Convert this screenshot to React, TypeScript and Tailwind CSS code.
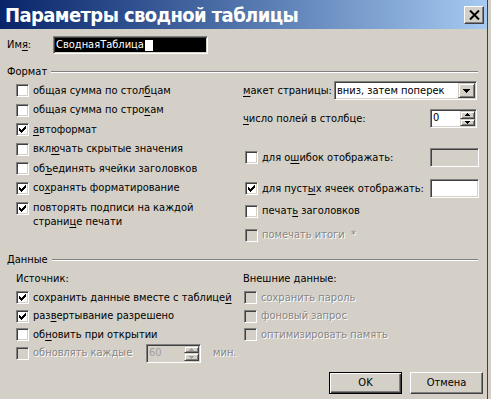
import React from "react";

const sunken =
  "border border-t-[#808080] border-l-[#808080] border-r-white border-b-white shadow-[inset_1px_1px_0_#404040,inset_-1px_-1px_0_#d4d0c8]";
const raised =
  "border border-t-[#d4d0c8] border-l-[#d4d0c8] border-r-[#404040] border-b-[#404040] shadow-[inset_1px_1px_0_#fff,inset_-1px_-1px_0_#808080]";
const grayText = "text-[#868686] [text-shadow:1px_1px_0_#fff]";

function U({ children }: { children: React.ReactNode }) {
  return <span className="underline decoration-1 underline-offset-[2px]">{children}</span>;
}

function Box({ checked, disabled }: { checked?: boolean; disabled?: boolean }) {
  return (
    <span
      className={`relative block w-[13px] h-[13px] shrink-0 ${sunken} ${disabled ? "bg-[#d4d0c8]" : "bg-white"}`}
    >
      {checked && (
        <svg
          width="7"
          height="7"
          viewBox="0 0 7 7"
          shapeRendering="crispEdges"
          className="absolute left-[2px] top-[2px]"
        >
          <path
            fill="#000"
            d="M0 2h1v3H0zM1 3h1v3H1zM2 4h1v3H2zM3 3h1v3H3zM4 2h1v3H4zM5 1h1v3H5zM6 0h1v3H6z"
          />
        </svg>
      )}
    </span>
  );
}

function Check({
  checked,
  disabled,
  children,
  className = "h-[19.5px]",
}: {
  checked?: boolean;
  disabled?: boolean;
  children: React.ReactNode;
  className?: string;
}) {
  return (
    <div className={`flex items-center gap-[4px] ${className}`}>
      <Box checked={checked} disabled={disabled} />
      <span className={disabled ? grayText : ""}>{children}</span>
    </div>
  );
}

function Arrow({ up, small, color = "#000" }: { up?: boolean; small?: boolean; color?: string }) {
  if (small) {
    return (
      <svg width="5" height="3" viewBox="0 0 5 3" shapeRendering="crispEdges">
        <path
          fill={color}
          d={up ? "M2 0h1v1H2zM1 1h3v1H1zM0 2h5v1H0z" : "M0 0h5v1H0zM1 1h3v1H1zM2 2h1v1H2z"}
        />
      </svg>
    );
  }
  return (
    <svg width="7" height="4" viewBox="0 0 7 4" shapeRendering="crispEdges">
      <path fill={color} d="M0 0h7v1H0zM1 1h5v1H1zM2 2h3v1H2zM3 3h1v1H3z" />
    </svg>
  );
}

function Spin({ value, disabled, className }: { value: string; disabled?: boolean; className: string }) {
  const arrow = disabled ? "#a0a0a0" : "#000";
  return (
    <div className={`flex ${sunken} ${disabled ? "bg-[#d4d0c8]" : "bg-white"} ${className}`}>
      <span className={`flex-1 pl-[2px] leading-[16px] ${disabled ? "text-[#a0a0a0]" : ""}`}>{value}</span>
      <div className="flex flex-col w-[16px] p-[1px] pl-0">
        <div className={`flex-1 flex items-center justify-center bg-[#d4d0c8] ${raised}`}>
          <Arrow up small color={arrow} />
        </div>
        <div className={`flex-1 flex items-center justify-center bg-[#d4d0c8] ${raised}`}>
          <Arrow small color={arrow} />
        </div>
      </div>
    </div>
  );
}

function GroupHeader({ title }: { title: string }) {
  return (
    <div className="flex items-center h-[14px] pl-[7px] pr-[9px]">
      <span>{title}</span>
      <div className="flex-1 ml-[4px] h-[2px] border-t border-t-[#808080] border-b border-b-white" />
    </div>
  );
}

function TitleBar() {
  return (
    <div className="flex items-center justify-between h-[29px] pl-[5px] pr-[3px] bg-gradient-to-r from-[#0a246a] to-[#a6caf0]">
      <span className="text-white font-bold text-[20px] leading-none tracking-[-0.6px]">
        Параметры сводной таблицы
      </span>
      <button className="flex items-center justify-center w-[20px] h-[18px] bg-[#d4d0c8] border border-t-white border-l-white border-r-[#404040] border-b-[#404040] shadow-[inset_-1px_-1px_0_#808080]">
        <svg width="11" height="10" viewBox="0 0 11 10">
          <path d="M1 0.5 L10 9.5 M10 0.5 L1 9.5" stroke="#000" strokeWidth="2" />
        </svg>
      </button>
    </div>
  );
}

export default function App() {
  return (
    <div className="flex w-[491px] h-[399px] overflow-hidden whitespace-nowrap bg-[#d4d0c8] text-[11px] leading-[14px] text-black [font-family:'DejaVu_Sans_Condensed','DejaVu_Sans',sans-serif]">
      <div className="flex flex-col w-[487px]">
        <TitleBar />

        <div className="flex items-center mt-[7px] h-[18px] pl-[7px]">
          <span className="w-[46px]">
            Им<U>я</U>:
          </span>
          <div className={`flex items-center w-[155px] h-[18px] bg-white p-[1px] ${sunken}`}>
            <div className="flex items-center w-full h-full bg-black text-white pl-[1px]">
              <span>СводнаяТаблица</span>
              <span className="w-[8px] h-[11px] bg-white ml-[1px]" />
            </div>
          </div>
        </div>

        <div className="mt-[11px]">
          <GroupHeader title="Формат" />
        </div>

        <div className="grid grid-cols-[227px_1fr] h-[172px] mt-[2px] pl-[16px] pr-[8px]">
          <div className="flex flex-col">
            <Check>
              общая сумма по стол<U>б</U>цам
            </Check>
            <Check>
              общая сумма по стро<U>к</U>ам
            </Check>
            <Check checked>
              <U>а</U>втоформат
            </Check>
            <Check>
              вкл<U>ю</U>чать скрытые значения
            </Check>
            <Check>
              об<U>ъ</U>единять ячейки заголовков
            </Check>
            <Check checked>
              со<U>х</U>ранять форматирование
            </Check>
            <div className="flex items-start gap-[4px] pt-[3px]">
              <span className="mt-[0.5px]">
                <Box checked />
              </span>
              <span>
                повторять подписи на каждой
                <br />
                страни<U>ц</U>е печати
              </span>
            </div>
          </div>

          <div className="flex flex-col">
            <div className="flex items-center h-[19px]">
              <span className="w-[91px]">
                <U>м</U>акет страницы:
              </span>
              <div className={`flex items-center w-[143px] h-[19px] bg-white ${sunken}`}>
                <span className="flex-1 pl-[2px]">вниз, затем поперек</span>
                <div className={`flex items-center justify-center w-[17px] h-[15px] mr-[1px] bg-[#d4d0c8] ${raised}`}>
                  <Arrow />
                </div>
              </div>
            </div>

            <div className="flex items-center h-[19px] mt-[9px]">
              <span className="flex-1">
                <U>ч</U>исло полей в столбце:
              </span>
              <Spin value="0" className="w-[47px] h-[19px] mr-[2px]" />
            </div>

            <div className="flex items-center h-[19px] mt-[20px] pl-[2px]">
              <Check className="flex-1 h-[19px]">
                для о<U>ш</U>ибок отображать:
              </Check>
              <div className={`w-[49px] h-[19px] bg-[#d4d0c8] ${sunken}`} />
            </div>

            <div className="flex items-center h-[19px] mt-[12px] pl-[2px]">
              <Check checked className="flex-1 h-[19px]">
                для пуст<U>ы</U>х ячеек отображать:
              </Check>
              <div className={`w-[49px] h-[19px] bg-white ${sunken}`} />
            </div>

            <div className="pl-[2px] mt-[3px]">
              <Check className="h-[20px]">
                печат<U>ь</U> заголовков
              </Check>
              <Check disabled className="h-[20px] mt-[4px]">
                помечать итоги &nbsp;*
              </Check>
            </div>
          </div>
        </div>

        <GroupHeader title="Данные" />

        <div className="grid grid-cols-[227px_1fr] mt-[3px] pl-[16px] pr-[8px]">
          <div className="flex flex-col">
            <div className="flex items-center h-[18.5px]">Источник:</div>
            <Check checked className="h-[18.5px]">
              сохранить данные вместе с таблице<U>й</U>
            </Check>
            <Check checked className="h-[18.5px]">
              раз<U>в</U>ертывание разрешено
            </Check>
            <Check className="h-[18.5px]">
              об<U>н</U>овить при открытии
            </Check>
            <div className="flex items-center h-[18.5px]">
              <Check disabled className="w-[130px] h-[18.5px]">
                обновлять каждые
              </Check>
              <Spin value="60" disabled className="w-[55px] h-[19px] shrink-0" />
              <span className={`ml-[12px] ${grayText}`}>мин.</span>
            </div>
          </div>

          <div className="flex flex-col">
            <div className="flex items-center h-[18.5px]">Внешние данные:</div>
            <div className="pl-[1px]">
              <Check disabled className="h-[18.5px]">
                сохранить пароль
              </Check>
              <Check disabled className="h-[18.5px]">
                фоновый запрос
              </Check>
              <Check disabled className="h-[18.5px]">
                оптимизировать память
              </Check>
            </div>
          </div>
        </div>

        <div className="flex justify-end gap-[8px] mt-[9px] pr-[4px]">
          <button className="w-[73px] h-[22px] bg-[#d4d0c8] border border-black shadow-[inset_1px_1px_0_#fff,inset_-1px_-1px_0_#404040,inset_-2px_-2px_0_#808080]">
            OK
          </button>
          <button className="w-[73px] h-[22px] bg-[#d4d0c8] border border-t-white border-l-white border-r-[#404040] border-b-[#404040] shadow-[inset_-1px_-1px_0_#808080]">
            Отмена
          </button>
        </div>
      </div>
      <div className="w-[4px] border-l border-l-[#404040] bg-[#d4d0c8]" />
    </div>
  );
}
